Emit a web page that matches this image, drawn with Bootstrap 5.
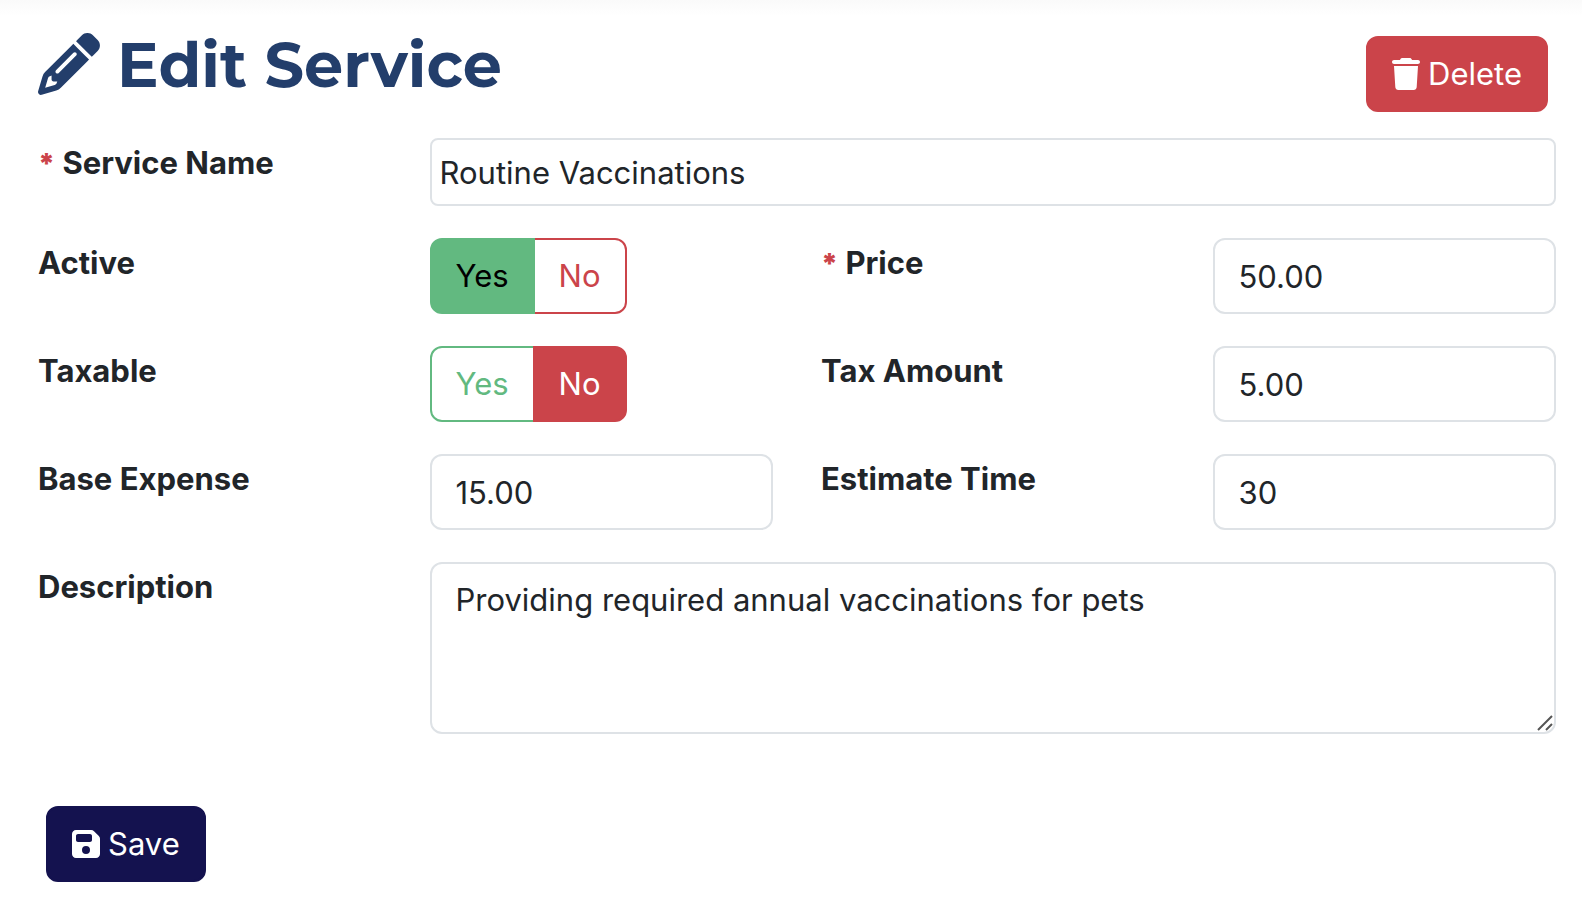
<!DOCTYPE html>
<html lang="en">
<head>
<meta charset="utf-8">
<meta name="viewport" content="width=device-width, initial-scale=1">
<title>Edit Service</title>
<link href="https://cdn.jsdelivr.net/npm/bootstrap@5.3.0/dist/css/bootstrap.min.css" rel="stylesheet">
<style>
  :root { --brand-red: #cb444a; --brand-green: #62b980; --brand-navy: #14124f; --line: #dee2e6; }
  body {
    font-family: Inter, "Liberation Sans", sans-serif;
    font-size: 31px; line-height: 48px; color: #212529;
    background: linear-gradient(#fafafa, #fff 16px) no-repeat #fff;
  }
  .page { padding: 24px 2px 24px 14px; }
  .page .row { --bs-gutter-x: 48px; margin: 0 0 32px; }
  .page-head { padding: 9px 32px 0 24px; margin-bottom: 26px; }
  .page-title { font-family: Montserrat, Inter, sans-serif; font-size: 62px; line-height: 64px; font-weight: 700; color: #233e6b; gap: 17px; }
  .page-title svg { width: 62px; height: 62px; }
  .field-label { font-weight: 700; padding-top: 1px; }
  .required { color: var(--brand-red); font-weight: 900; font-size: 28px; }
  .btn { --bs-btn-padding-x: 24px; --bs-btn-padding-y: 12px; --bs-btn-font-size: 31px; --bs-btn-line-height: 48px; --bs-btn-border-width: 2px; --bs-btn-border-radius: 12px; }
  .btn svg { width: 28px; height: 32px; }
  .btn-remove { --bs-btn-color: #fff; --bs-btn-bg: var(--brand-red); --bs-btn-border-color: var(--brand-red); --bs-btn-hover-color: #fff; --bs-btn-hover-bg: #b43b41; margin-top: 3px; }
  .btn-save { --bs-btn-color: #fff; --bs-btn-bg: var(--brand-navy); --bs-btn-border-color: var(--brand-navy); --bs-btn-hover-color: #fff; --bs-btn-hover-bg: #26236b; }
  .btn-outline-success { --bs-btn-color: var(--brand-green); --bs-btn-border-color: var(--brand-green); --bs-btn-active-bg: var(--brand-green); --bs-btn-active-border-color: var(--brand-green); --bs-btn-active-color: #000; }
  .btn-outline-danger { --bs-btn-color: var(--brand-red); --bs-btn-border-color: var(--brand-red); --bs-btn-active-bg: var(--brand-red); --bs-btn-active-border-color: var(--brand-red); }
  .page .btn-group > .btn-check:not(:first-child) + .btn { margin-left: -2px; }
  .form-control { font-size: 31px; line-height: 48px; padding: 12px 24px; border: 2px solid var(--line); border-radius: 12px; color: #212529; }
  input.form-control { height: 76px; }
  input.form-control.name-box { height: 68px; padding: 8px; border-radius: 8px; }
  textarea.form-control { display: block; resize: none; height: 172px; }
  .grip { position: absolute; right: 3px; bottom: 3px; width: 16px; height: 16px; pointer-events: none; }
  .page-foot { padding: 40px 32px 0; }
</style>
</head>
<body>
<main class="page">
  <header class="page-head d-flex justify-content-between align-items-start">
    <h1 class="page-title d-flex m-0">
      <svg viewBox="0 0 512 512" fill="currentColor" aria-hidden="true"><path d="M410.3 231l11.3-11.3-33.9-33.9-62.1-62.1L291.7 89.8l-11.3 11.3-22.6 22.6L58.6 322.9c-10.4 10.4-18 23.3-22.2 37.4L1 480.7c-2.5 8.4-.2 17.5 6.1 23.7s15.3 8.5 23.7 6.1l120.3-35.4c14.1-4.2 27-11.8 37.4-22.2L387.7 253.7 410.3 231zM160 399.4l-9.1 22.7c-4 3.1-8.5 5.4-13.3 6.9L59.4 452l23-78.1c1.4-4.9 3.8-9.4 6.9-13.3l22.7-9.1v32c0 8.8 7.2 16 16 16h32zM362.7 18.7L348.3 33.2 325.7 55.8 314.3 67.1l33.9 33.9 62.1 62.1 33.9 33.9 11.3-11.3 22.6-22.6 14.5-14.5c25-25 25-65.5 0-90.5L453.3 18.7c-25-25-65.5-25-90.5 0zm-47.4 168l-144 144c-6.2 6.2-16.4 6.2-22.6 0s-6.2-16.4 0-22.6l144-144c6.2-6.2 16.4-6.2 22.6 0s6.2 16.4 0 22.6z"/></svg>
      Edit Service
    </h1>
    <button type="button" class="btn btn-remove d-flex align-items-center gap-2">
      <svg viewBox="0 0 448 512" fill="currentColor" aria-hidden="true"><path d="M135.2 17.7L128 32H32C14.3 32 0 46.3 0 64S14.3 96 32 96H416c17.7 0 32-14.3 32-32s-14.3-32-32-32H320l-7.2-14.3C307.4 6.8 296.3 0 284.2 0H163.8c-12.1 0-23.2 6.8-28.6 17.7zM416 128H32L53.2 467c1.6 25.3 22.6 45 47.9 45H346.9c25.3 0 46.3-19.7 47.9-45L416 128z"/></svg>
      Delete
    </button>
  </header>

  <form>
    <div class="row">
      <label class="col-3 field-label" for="name"><span class="required">*</span> Service Name</label>
      <div class="col-9"><input id="name" type="text" class="form-control name-box" value="Routine Vaccinations"></div>
    </div>

    <div class="row">
      <div class="col-3 field-label" id="active-label">Active</div>
      <div class="col-3">
        <div class="btn-group" role="group" aria-labelledby="active-label">
          <input type="radio" class="btn-check" name="active" id="active-yes" checked>
          <label class="btn btn-outline-success" for="active-yes">Yes</label>
          <input type="radio" class="btn-check" name="active" id="active-no">
          <label class="btn btn-outline-danger" for="active-no">No</label>
        </div>
      </div>
      <label class="col-3 field-label" for="price"><span class="required">*</span> Price</label>
      <div class="col-3"><input id="price" type="text" inputmode="decimal" class="form-control" value="50.00"></div>
    </div>

    <div class="row">
      <div class="col-3 field-label" id="taxable-label">Taxable</div>
      <div class="col-3">
        <div class="btn-group" role="group" aria-labelledby="taxable-label">
          <input type="radio" class="btn-check" name="taxable" id="taxable-yes">
          <label class="btn btn-outline-success" for="taxable-yes">Yes</label>
          <input type="radio" class="btn-check" name="taxable" id="taxable-no" checked>
          <label class="btn btn-outline-danger" for="taxable-no">No</label>
        </div>
      </div>
      <label class="col-3 field-label" for="tax">Tax Amount</label>
      <div class="col-3"><input id="tax" type="text" inputmode="decimal" class="form-control" value="5.00"></div>
    </div>

    <div class="row">
      <label class="col-3 field-label" for="expense">Base Expense</label>
      <div class="col-3"><input id="expense" type="text" inputmode="decimal" class="form-control" value="15.00"></div>
      <label class="col-3 field-label" for="time">Estimate Time</label>
      <div class="col-3"><input id="time" type="text" inputmode="numeric" class="form-control" value="30"></div>
    </div>

    <div class="row">
      <label class="col-3 field-label" for="description">Description</label>
      <div class="col-9">
        <div class="position-relative">
          <textarea id="description" class="form-control" rows="3">Providing required annual vaccinations for pets</textarea>
          <svg class="grip" viewBox="0 0 16 16" fill="none" stroke="#555" stroke-width="2" aria-hidden="true"><path d="M1 15L15 1M9 15l6-6"/></svg>
        </div>
      </div>
    </div>

    <div class="page-foot">
      <button type="submit" class="btn btn-save d-inline-flex align-items-center gap-2">
        <svg viewBox="0 0 448 512" fill="currentColor" aria-hidden="true"><path d="M64 32C28.7 32 0 60.7 0 96V416c0 35.3 28.7 64 64 64H384c35.3 0 64-28.7 64-64V173.3c0-17-6.7-33.3-18.7-45.3L352 50.7C340 38.7 323.7 32 306.7 32H64zm0 96c0-17.7 14.3-32 32-32H288c17.7 0 32 14.3 32 32v64c0 17.7-14.3 32-32 32H96c-17.7 0-32-14.3-32-32V128zM224 288a64 64 0 1 1 0 128 64 64 0 1 1 0-128z"/></svg>
        Save
      </button>
    </div>
  </form>
</main>
<script src="https://cdn.jsdelivr.net/npm/bootstrap@5.3.0/dist/js/bootstrap.bundle.min.js"></script>
</body>
</html>
